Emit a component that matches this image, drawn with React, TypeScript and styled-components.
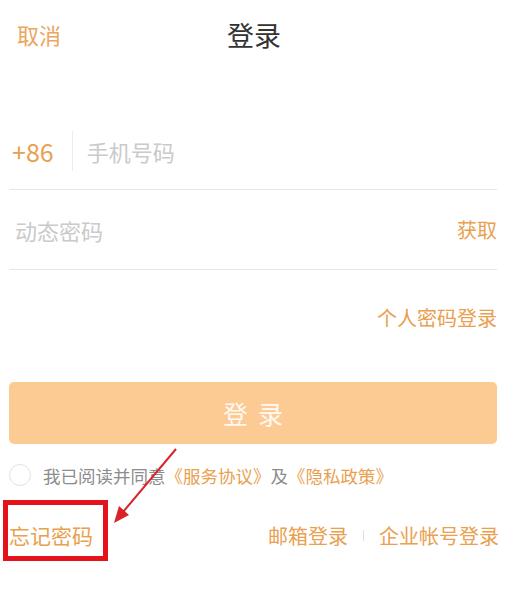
import React from "react";
import styled, { createGlobalStyle } from "styled-components";

const Global = createGlobalStyle`
  html, body { margin: 0; padding: 0; background: #fff; }
  body { font-family: "Noto Sans CJK SC", "Noto Sans", sans-serif; }
  * { box-sizing: border-box; }
`;

const ORANGE = "#e9a04f";

const Page = styled.div`
  position: relative;
  width: 513px;
  height: 600px;
  padding: 0 16px 0 9px;
  background: #fff;
  overflow: hidden;
`;

const Header = styled.header`
  height: 68px;
  display: grid;
  grid-template-columns: 1fr auto 1fr;
  align-items: center;
  padding-left: 8px;
`;

const Cancel = styled.span`
  font-size: 22px;
  color: #eba660;
  justify-self: start;
`;

const Title = styled.h1`
  margin: 0;
  font-size: 27px;
  font-weight: 400;
  color: #333;
  margin-right: 6px;
`;

const Field = styled.div<{ $height: number; $top?: number }>`
  display: flex;
  align-items: center;
  height: ${(p) => p.$height}px;
  margin-top: ${(p) => p.$top ?? 0}px;
  border-bottom: 1px solid #e6e6e6;
`;

const Prefix = styled.span`
  font-size: 25px;
  color: ${ORANGE};
  padding-left: 3px;
`;

const VDivider = styled.span`
  width: 1px;
  height: 40px;
  background: #ececec;
  margin: 0 14px 0 18px;
`;

const Placeholder = styled.span<{ $indent?: number }>`
  flex: 1;
  font-size: 22px;
  color: #cacaca;
  padding-left: ${(p) => p.$indent ?? 0}px;
`;

const Action = styled.span`
  font-size: 20px;
  color: ${ORANGE};
`;

const SwitchRow = styled.div`
  height: 94px;
  display: flex;
  align-items: center;
  justify-content: flex-end;
`;

const SwitchLink = styled.span`
  font-size: 20px;
  color: ${ORANGE};
`;

const LoginButton = styled.button`
  display: flex;
  width: 100%;
  height: 62px;
  margin-top: 18px;
  align-items: center;
  justify-content: center;
  border: none;
  border-radius: 5px;
  background: #fccb94;
  color: rgba(255, 255, 255, 0.9);
  font-family: inherit;
  font-size: 25px;
  letter-spacing: 10px;
  padding: 0 0 0 10px;
`;

const Agreement = styled.div`
  display: flex;
  align-items: center;
  gap: 12px;
  height: 22px;
  margin-top: 20px;
`;

const Circle = styled.span`
  width: 22px;
  height: 22px;
  border-radius: 50%;
  border: 1px solid #e3e3e3;
  flex: none;
`;

const AgreeText = styled.span`
  font-size: 17.5px;
  color: #8c8c8c;
  white-space: nowrap;
`;

const Doc = styled.span`
  color: ${ORANGE};
`;

const BottomRow = styled.div`
  display: flex;
  align-items: center;
  justify-content: space-between;
  height: 26px;
  margin-top: 36px;
  margin-right: -2px;
`;

const Forgot = styled.span`
  position: relative;
  font-size: 21px;
  line-height: 26px;
  color: ${ORANGE};
  &::after {
    content: "";
    position: absolute;
    top: -22px;
    left: -6px;
    right: -15px;
    bottom: -13px;
    border: 5px solid #e3121b;
  }
`;

const Links = styled.div`
  display: flex;
  align-items: center;
  gap: 15px;
`;

const BottomLink = styled.span`
  font-size: 20px;
  color: ${ORANGE};
`;

const SmallDivider = styled.span`
  width: 1px;
  height: 11px;
  background: #dedede;
`;

const ArrowOverlay = styled.svg`
  position: absolute;
  left: 0;
  top: 0;
  pointer-events: none;
`;

export default function App() {
  return (
    <>
      <Global />
      <Page>
        <Header>
          <Cancel>取消</Cancel>
          <Title>登录</Title>
          <span />
        </Header>

        <Field $height={77} $top={45}>
          <Prefix>+86</Prefix>
          <VDivider />
          <Placeholder>手机号码</Placeholder>
        </Field>

        <Field $height={80}>
          <Placeholder $indent={6}>动态密码</Placeholder>
          <Action>获取</Action>
        </Field>

        <SwitchRow>
          <SwitchLink>个人密码登录</SwitchLink>
        </SwitchRow>

        <LoginButton>登录</LoginButton>

        <Agreement>
          <Circle />
          <AgreeText>
            我已阅读并同意<Doc>《服务协议》</Doc>及<Doc>《隐私政策》</Doc>
          </AgreeText>
        </Agreement>

        <BottomRow>
          <Forgot>忘记密码</Forgot>
          <Links>
            <BottomLink>邮箱登录</BottomLink>
            <SmallDivider />
            <BottomLink>企业帐号登录</BottomLink>
          </Links>
        </BottomRow>

        <ArrowOverlay width="513" height="600" viewBox="0 0 513 600">
          <line x1="176" y1="449" x2="123" y2="512" stroke="#d8232a" strokeWidth="2" />
          <polygon points="114,523 129,515 119,506" fill="#d8232a" />
        </ArrowOverlay>
      </Page>
    </>
  );
}
